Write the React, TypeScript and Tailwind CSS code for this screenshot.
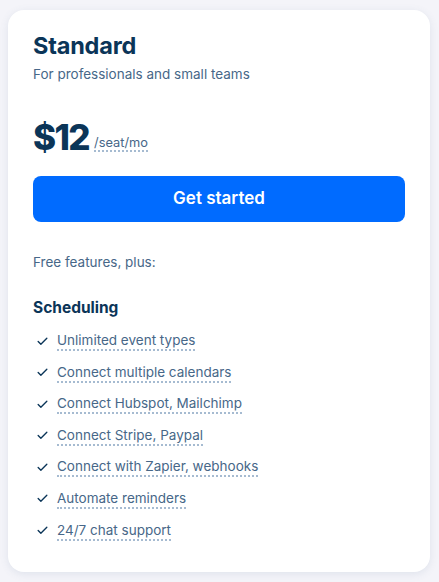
import { Check } from "lucide-react";

const features = [
  "Unlimited event types",
  "Connect multiple calendars",
  "Connect Hubspot, Mailchimp",
  "Connect Stripe, Paypal",
  "Connect with Zapier, webhooks",
  "Automate reminders",
  "24/7 chat support",
];

export default function App() {
  return (
    <div
      className="min-h-[582px] bg-[#f4f4f9] px-2 pt-[10px] pb-[10px]"
      style={{ fontFamily: "Inter, 'Noto Sans', sans-serif" }}
    >
      <section className="h-[562px] w-[422px] rounded-[16px] bg-white px-[25px] pt-[21px] shadow-[0_2px_8px_rgba(71,103,136,0.12)]">
        <h2 className="text-[23.5px] font-bold leading-[30px] tracking-[-0.2px] text-[#0b3558]">Standard</h2>
        <p className="mt-[3px] text-[13.5px] leading-[20px] text-[#476788]">
          For professionals and small teams
        </p>
        <div className="mt-[31px] flex items-end gap-[5px]">
          <span className="text-[35px] font-extrabold leading-[44px] tracking-[-1.6px] text-[#0b3558]">$12</span>
          <span className="mb-[7px] border-b-2 border-dotted border-[#a6bbd1] text-[12.8px] leading-[15px] text-[#476788]">
            /seat/mo
          </span>
        </div>
        <button className="mt-[17px] flex h-[46px] w-full items-center justify-center rounded-[8px] bg-[#006bff] text-[17px] font-semibold text-white">
          Get started
        </button>
        <p className="mt-[30px] text-[13.5px] leading-[20px] text-[#476788]">Free features, plus:</p>
        <h3 className="mt-[25px] text-[15.5px] font-bold leading-[22px] text-[#0b3558]">Scheduling</h3>
        <ul className="mt-[12px] flex flex-col gap-[11.6px]">
          {features.map((f) => (
            <li key={f} className="flex items-center gap-[8px] pl-[3px]">
              <Check size={13} strokeWidth={2.5} className="text-[#0b3558]" />
              <span className="border-b-2 border-dotted border-[#a6bbd1] text-[13.5px] leading-[18px] text-[#476788]">
                {f}
              </span>
            </li>
          ))}
        </ul>
      </section>
    </div>
  );
}
